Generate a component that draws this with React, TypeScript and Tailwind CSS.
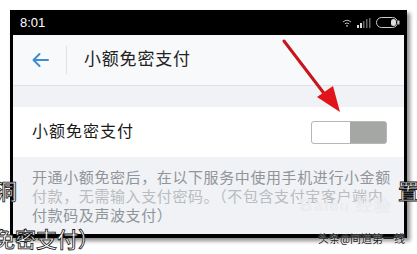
import React from "react";

const cjk = "font-['Roboto','Noto_Sans_CJK_SC',sans-serif]";
const outline = "[-webkit-text-stroke:0.8px_#111] text-white font-medium";

const StatusIcons = () => (
  <div className="flex items-center gap-[5px] pr-[4px]">
    <svg width="10" height="8" viewBox="0 0 10 8">
      <path d="M1 3 Q5 -0.5 9 3" stroke="#bbb" strokeWidth="1" fill="none" />
      <path d="M2.8 4.8 Q5 3 7.2 4.8" stroke="#bbb" strokeWidth="1" fill="none" />
      <circle cx="5" cy="6.8" r="0.9" fill="#bbb" />
    </svg>
    <svg width="14" height="10" viewBox="0 0 14 10">
      <rect x="0" y="7" width="2" height="3" fill="#ddd" />
      <rect x="3" y="5" width="2" height="5" fill="#ddd" />
      <rect x="6" y="3" width="1.5" height="7" fill="#666" />
      <rect x="9" y="1" width="1.5" height="9" fill="#666" />
      <rect x="12" y="0" width="1.5" height="10" fill="#666" />
    </svg>
    <svg width="24" height="11" viewBox="0 0 24 11">
      <rect x="0.5" y="0.5" width="21" height="10" rx="5" stroke="#ccc" fill="none" />
      <rect x="15" y="2" width="5" height="7" rx="2.5" fill="#ddd" />
      <rect x="22" y="3.5" width="1.5" height="4" fill="#ccc" />
    </svg>
  </div>
);

export default function App() {
  return (
    <div className={`relative w-[417px] h-[254px] overflow-hidden bg-white ${cjk}`}>
      <div className="pt-[10px] pl-[10px]">
        <div className="w-[397px] h-[228px] bg-black px-[3px] pb-[4px] flex flex-col shadow-[3px_3px_4px_rgba(0,0,0,0.45)]">
          <div className="h-[25px] flex items-center justify-between pl-[7px]">
            <span className="text-white text-[13px] font-['Liberation_Sans',sans-serif]">8:01</span>
            <StatusIcons />
          </div>
          <div className="flex-1 flex flex-col bg-[#f0f2f5] overflow-hidden">
            <div className="h-[51px] shrink-0 flex items-center bg-[#f8f9fa] border-b border-[#dde2e6]">
              <div className="w-[53px] flex justify-center pl-[1px]">
                <svg width="18" height="16" viewBox="0 0 18 16">
                  <path d="M17 8 H2.5 M8.5 2 L2.5 8 L8.5 14" stroke="#3c8ed0" strokeWidth="2" fill="none" strokeLinecap="round" strokeLinejoin="round" />
                </svg>
              </div>
              <div className="w-px h-[28px] bg-[#dde2e6]" />
              <span className="ml-[17px] text-[17px] text-[#222] tracking-[0.8px]">小额免密支付</span>
            </div>
            <div className="h-[21px] shrink-0" />
            <div className="h-[50px] shrink-0 bg-white flex items-center justify-between pl-[19px] pr-[17px]">
              <span className="text-[16px] text-[#1a1a1a] tracking-[1px]">小额免密支付</span>
              <div className="w-[76px] h-[23px] rounded-[3px] border border-[#b5b8b5] bg-[#a4a7a4] flex">
                <div className="w-[38px] h-full rounded-l-[2px] bg-white" />
              </div>
            </div>
            <div className="pt-[12px] pl-[19px] pr-[4px] text-[15px] leading-[19px] text-[#90959a] tracking-[0.6px]">
              <div>开通小额免密后，在以下服务中使用手机进行小金额</div>
              <div className="text-[#b9bcc0]">付款，无需输入支付密码。（不包含支付宝客户端内</div>
              <div>付款码及声波支付）</div>
            </div>
          </div>
        </div>
      </div>

      <svg className="absolute left-0 top-0" width="417" height="254" viewBox="0 0 417 254">
        <line x1="284" y1="41" x2="326" y2="96" stroke="#c8151a" strokeWidth="3" strokeLinecap="round" />
        <path d="M317 97 L333 86 L340 112 Z" fill="#e0141a" />
      </svg>

      <span className="absolute left-[300px] top-[193px] text-[17px] font-bold text-[#eaecef] font-['Liberation_Sans',sans-serif] tracking-[1px]">
        Bai<span className="text-[15px]">du</span> 经验
      </span>
      <span className={`absolute left-[-4px] top-[177px] text-[21px] ${outline}`}>洞</span>
      <span className={`absolute left-[398px] top-[177px] text-[21px] ${outline}`}>置</span>
      <span className={`absolute left-[-6px] top-[228px] text-[21px] leading-[24px] ${outline}`}>免密支付）</span>
      <span className="absolute left-[318px] top-[232px] text-[11px] text-[#222] [text-shadow:0_0_2px_#fff]">头条@间道第一线</span>
    </div>
  );
}
